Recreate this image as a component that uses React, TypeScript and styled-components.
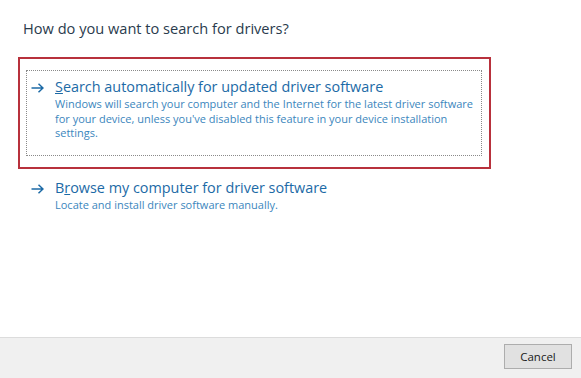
import styled, { createGlobalStyle } from 'styled-components';

const GlobalStyle = createGlobalStyle`
  html, body {
    margin: 0;
    padding: 0;
    background: #ffffff;
  }

  body {
    font-family: 'Open Sans', 'Noto Sans', 'Liberation Sans', sans-serif;
  }
`;

const Dialog = styled.div`
  display: flex;
  flex-direction: column;
  width: 581px;
  height: 378px;
  background: #ffffff;
  overflow: hidden;
`;

const Content = styled.main`
  flex: 1;
  display: flex;
  flex-direction: column;
  padding: 18px 0 0 0;
`;

const Heading = styled.h1`
  margin: 0 0 19px 23px;
  font-size: 14.6px;
  line-height: 20px;
  font-weight: 400;
  color: #2a3b4d;
`;

const Option = styled.div<{ $annotated?: boolean }>`
  margin-left: 18px;
  width: 473px;
  box-sizing: border-box;
  border: 2px solid ${(p) => (p.$annotated ? '#b8313c' : 'transparent')};
  padding: ${(p) => (p.$annotated ? '11px 7px 11px 6px' : '0 7px 0 6px')};
`;

const FocusBox = styled.div<{ $focused?: boolean }>`
  display: grid;
  grid-template-columns: 24px 1fr;
  border: 1px dotted ${(p) => (p.$focused ? '#8a8a8a' : 'transparent')};
  padding: 6px 4px ${(p) => (p.$focused ? 14 : 6)}px 4px;
`;

const Arrow = styled.svg`
  width: 13px;
  height: 10px;
  margin-top: 6px;
`;

const Texts = styled.div`
  display: flex;
  flex-direction: column;
`;

const Title = styled.div`
  font-size: 14.4px;
  line-height: 20px;
  color: #1c6aa6;

  u {
    text-decoration-thickness: 1px;
    text-underline-offset: 1px;
  }
`;

const Description = styled.p`
  margin: 0;
  font-size: 11px;
  line-height: 14.5px;
  color: #3b86bd;
`;

const Footer = styled.footer`
  display: flex;
  justify-content: flex-end;
  height: 41px;
  box-sizing: border-box;
  padding: 6px 9px 0 0;
  background: #f0f0f0;
  border-top: 1px solid #dcdcdc;
`;

const Button = styled.button`
  width: 68px;
  height: 25px;
  padding: 0;
  font-family: 'Open Sans', 'Noto Sans', 'Liberation Sans', sans-serif;
  font-size: 11.5px;
  color: #1a1a1a;
  background: #e1e1e1;
  border: 1px solid #adadad;
  border-radius: 0;
`;

const ArrowIcon = () => (
  <Arrow viewBox="0 0 13 10" fill="none">
    <path d="M0.5 5H12M7.5 0.8L12 5L7.5 9.2" stroke="#1c6aa6" strokeWidth="1.5" />
  </Arrow>
);

export default function App() {
  return (
    <Dialog>
      <GlobalStyle />
      <Content>
        <Heading>How do you want to search for drivers?</Heading>

        <Option $annotated>
          <FocusBox $focused>
            <ArrowIcon />
            <Texts>
              <Title>
                <u>S</u>earch automatically for updated driver software
              </Title>
              <Description>
                Windows will search your computer and the Internet for the latest driver software
                for your device, unless you've disabled this feature in your device installation
                settings.
              </Description>
            </Texts>
          </FocusBox>
        </Option>

        <Option>
          <FocusBox>
            <ArrowIcon />
            <Texts>
              <Title>
                B<u>r</u>owse my computer for driver software
              </Title>
              <Description>Locate and install driver software manually.</Description>
            </Texts>
          </FocusBox>
        </Option>
      </Content>

      <Footer>
        <Button>Cancel</Button>
      </Footer>
    </Dialog>
  );
}
